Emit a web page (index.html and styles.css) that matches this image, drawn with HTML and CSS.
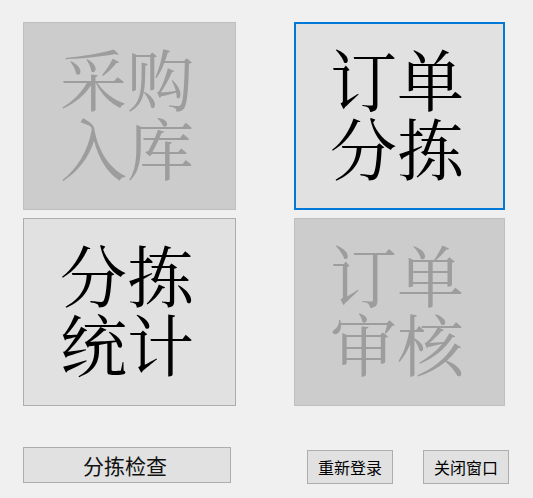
FILE: index.html
```html
<!DOCTYPE html>
<html lang="zh-CN">
<head>
<meta charset="utf-8">
<title>主菜单</title>
<link rel="stylesheet" href="styles.css">
</head>
<body>
<div class="panel">
  <div class="grid">
    <button class="big disabled"><span class="ln">采购</span><span class="ln">入库</span></button>
    <button class="big focused"><span class="ln">订单</span><span class="ln">分拣</span></button>
    <button class="big"><span class="ln">分拣</span><span class="ln">统计</span></button>
    <button class="big disabled"><span class="ln">订单</span><span class="ln">审核</span></button>
  </div>
  <div class="bottom">
    <button class="small check">分拣检查</button>
    <div class="right">
      <button class="small act">重新登录</button>
      <button class="small act">关闭窗口</button>
    </div>
  </div>
</div>
</body>
</html>
```
FILE: styles.css
```css
html, body {
  margin: 0;
  padding: 0;
  background: #f0f0f0;
  width: 533px;
  height: 498px;
  overflow: hidden;
}
.panel {
  padding: 22px 0 0 23px;
}
button {
  margin: 0;
  padding: 0;
  box-sizing: border-box;
  background: #e1e1e1;
  border: 1px solid #adadad;
  color: #000;
  cursor: default;
}
.grid {
  display: grid;
  grid-template-columns: 213px 211px;
  grid-template-rows: 188px 188px;
  column-gap: 58px;
  row-gap: 8px;
}
.big {
  font-family: "Noto Serif CJK SC", "Noto Sans CJK SC", serif;
  font-size: 67px;
  display: flex;
  flex-direction: column;
  align-items: center;
  justify-content: center;
  text-align: center;
  padding: 0 5px 8px 0;
}
.ln {
  display: block;
  height: 69px;
  line-height: 69px;
  overflow: visible;
}
.big.disabled {
  background: #cccccc;
  border-color: #bfbfbf;
  color: #9d9d9d;
}
.big.focused {
  border: 2px solid #0078d7;
}
.bottom {
  display: flex;
  margin-top: 41px;
  align-items: flex-start;
}
.small {
  font-family: "Noto Sans CJK SC", sans-serif;
  display: flex;
  align-items: center;
  justify-content: center;
}
.check {
  width: 208px;
  height: 36px;
  font-size: 21px;
  color: #111;
  padding-right: 4px;
}
.right {
  display: flex;
  gap: 30px;
  margin-left: 76px;
  margin-top: 3px;
}
.act {
  width: 86px;
  height: 34px;
  font-size: 16px;
}
```
